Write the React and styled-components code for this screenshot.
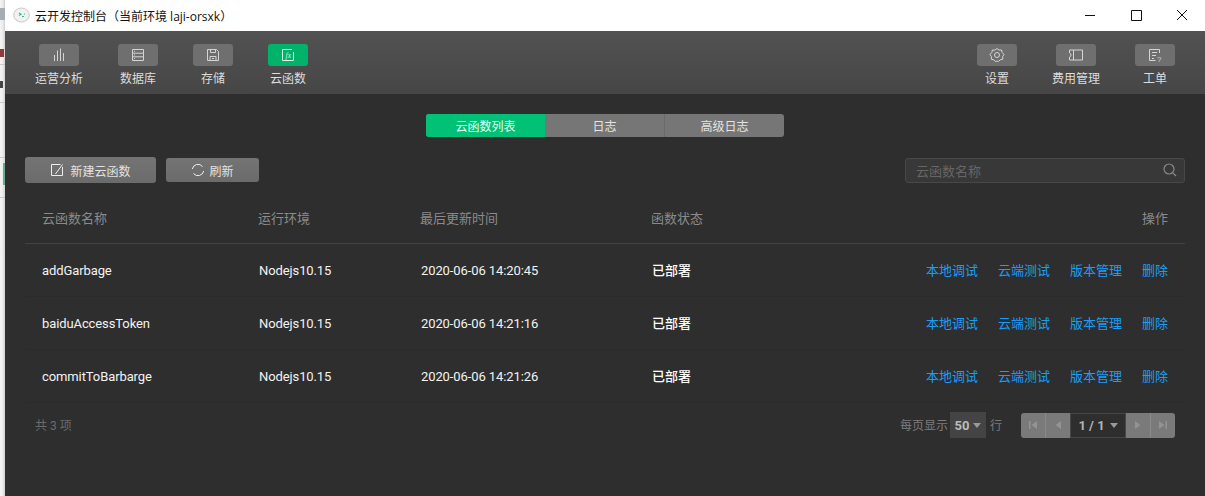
import React from 'react';
import styled, { createGlobalStyle } from 'styled-components';

const GlobalStyle = createGlobalStyle`
    html, body {
        margin: 0;
        padding: 0;
        background: #fff;
    }
    body {
        font-family: Roboto, "Noto Sans CJK SC", sans-serif;
        overflow: hidden;
    }
`;

const Page = styled.div`
    display: flex;
    width: 1205px;
    height: 496px;
    overflow: hidden;
`;

// sliver of the window behind
const BackStrip = styled.div`
    display: flex;
    flex-direction: column;
    width: 5px;
    background: linear-gradient(90deg, #f4f4f4 0, #ececec 55%, #cfcfcf 100%);
`;
const StripPart = styled.div`
    box-sizing: border-box;
    height: ${p => p.$h}px;
    width: ${p => p.$w || 5}px;
    margin-left: ${p => p.$left || 0}px;
    background: ${p => p.$bg || 'transparent'};
    border-bottom: ${p => (p.$line ? '1px solid #c9c9c9' : '0')};
`;

const Main = styled.div`
    flex: 1;
    display: flex;
    flex-direction: column;
    min-width: 0;
`;

const TitleBar = styled.div`
    display: flex;
    align-items: center;
    height: 31px;
    padding-left: 8px;
    background: #fff;
`;
const TitleText = styled.div`
    margin-left: 5px;
    font-family: "Open Sans", "Noto Sans CJK SC", sans-serif;
    font-size: 12px;
    color: #111;
    white-space: nowrap;
`;
const WinControls = styled.div`
    display: flex;
    margin: -1px 15px 0 auto;
    gap: 30px;
`;
const WinIcon = styled.svg`
    display: block;
    width: 16px;
    height: 16px;
    fill: none;
    stroke: #111;
    stroke-width: 1;
`;

const Header = styled.div`
    display: flex;
    justify-content: space-between;
    height: 63px;
    padding: 13px 30px 0;
    box-sizing: border-box;
    background: linear-gradient(180deg, #525252 0, #464646 100%);
`;
const NavGroup = styled.div`
    display: flex;
    gap: 35px;
`;
const NavItem = styled.div`
    display: flex;
    flex-direction: column;
    align-items: center;
    min-width: 40px;
`;
const NavButton = styled.div`
    display: flex;
    align-items: center;
    justify-content: center;
    width: 40px;
    height: 22px;
    border-radius: 3px;
    background: ${p => (p.$active ? '#00b26a' : '#6f6f6f')};
`;
const NavIcon = styled.svg`
    display: block;
    width: 16px;
    height: 16px;
    fill: none;
    stroke: ${p => (p.$active ? '#d8f5e8' : '#d4d4d4')};
    stroke-width: 1;
`;
const NavLabel = styled.div`
    margin-top: 5px;
    font-size: 12px;
    line-height: 16px;
    color: #dcdcdc;
    white-space: nowrap;
`;

const Content = styled.div`
    flex: 1;
    padding: 20px 20px 0;
    background: #2e2e2e;
`;

const Tabs = styled.div`
    display: flex;
    width: 358px;
    height: 23px;
    margin: 0 auto 20px;
    border-radius: 3px;
    overflow: hidden;
    background: #767676;
`;
const Tab = styled.div`
    flex: 1;
    display: flex;
    align-items: center;
    justify-content: center;
    font-size: 12px;
    color: ${p => (p.$active ? '#e6fff3' : '#e4e4e4')};
    background: ${p => (p.$active ? '#00c176' : 'transparent')};
    border-left: ${p => (p.$divider ? '1px solid #6a6a6a' : '0')};
`;

const Toolbar = styled.div`
    display: flex;
    align-items: center;
    height: 26px;
    margin-bottom: 10px;
`;
const ActionButton = styled.div`
    display: flex;
    align-items: center;
    justify-content: center;
    gap: ${p => p.$gap}px;
    width: ${p => p.$w}px;
    height: ${p => p.$h}px;
    margin-right: 10px;
    border-radius: 3px;
    font-size: 12px;
    color: #e2e2e2;
    background: linear-gradient(180deg, #747474 0, #6b6b6b 100%);
`;
const ButtonIcon = styled.svg`
    display: block;
    width: 14px;
    height: 14px;
    fill: none;
    stroke: #eee;
    stroke-width: 1;
`;
const Search = styled.div`
    display: flex;
    align-items: center;
    justify-content: space-between;
    width: 280px;
    height: 25px;
    margin-left: auto;
    padding: 0 7px 0 10px;
    box-sizing: border-box;
    border: 1px solid #484848;
    border-radius: 3px;
    background: #383838;
    font-size: 13px;
    color: #666;
`;
const SearchIcon = styled.svg`
    display: block;
    width: 14px;
    height: 14px;
    fill: none;
    stroke: #8a8a8a;
    stroke-width: 1.2;
`;

const HeadRow = styled.div`
    display: grid;
    grid-template-columns: 216px 162px 231px 1fr;
    align-items: center;
    height: 51px;
    padding-bottom: 2px;
    box-sizing: border-box;
    border-bottom: 1px solid #424242;
    font-size: 13px;
    color: #8a8a8a;
`;
const BodyRow = styled.div`
    display: grid;
    grid-template-columns: 217px 162px 231px 1fr;
    align-items: center;
    height: 53px;
    box-sizing: border-box;
    border-bottom: 1px solid #2b2b2b;
    font-size: 13px;
    color: #f2f2f2;
`;
const Cell = styled.div`
    padding: 0 17px;
    white-space: nowrap;
`;
const DataCell = styled(Cell)`
    letter-spacing: -0.1px;
`;
const SplitCell = styled.div`
    display: flex;
    justify-content: space-between;
    align-items: center;
`;
const StatusText = styled.span`
    padding-left: 17px;
    white-space: nowrap;
    font-weight: ${p => (p.$strong ? 500 : 400)};
    color: ${p => (p.$strong ? '#fff' : 'inherit')};
    margin-top: ${p => (p.$strong ? -2 : 0)}px;
`;
const Actions = styled.div`
    display: flex;
    justify-content: flex-end;
    gap: 20px;
    margin-top: -1px;
    padding: 0 17px;
`;
const ActionLink = styled.span`
    color: #1b9df5;
    white-space: nowrap;
`;

const Footer = styled.div`
    display: flex;
    align-items: center;
    height: 26px;
    margin-top: 9px;
    padding: 0 10px;
    font-size: 12px;
    color: #6b6b6b;
`;
const ItemCount = styled.span`
    margin-top: -2px;
`;
const PageSize = styled.div`
    display: flex;
    align-items: center;
    margin-left: auto;
    font-size: 12px;
    color: #7c7c7c;
`;
const PageSizeText = styled.span`
    margin-top: -1px;
`;
const SizeSelect = styled.div`
    display: flex;
    align-items: center;
    justify-content: center;
    gap: 4px;
    width: 36px;
    height: 26px;
    margin: 0 4px 0 2px;
    background: #444;
    font-weight: 700;
    font-size: 13px;
    color: #bbb;
`;
const Caret = styled.i`
    width: 0;
    height: 0;
    border-left: 4px solid transparent;
    border-right: 4px solid transparent;
    border-top: 5px solid #999;
`;
const Pager = styled.div`
    display: flex;
    height: 25px;
    margin-left: 19px;
    border-radius: 3px;
    overflow: hidden;
    background: #7a7a7a;
`;
const PagerButton = styled.div`
    display: flex;
    align-items: center;
    justify-content: center;
    width: 24px;
    border-left: ${p => (p.$divider ? '1px solid #8a8a8a' : '0')};
`;
const PagerIcon = styled.svg`
    display: block;
    width: 10px;
    height: 10px;
    fill: #939393;
`;
const PagerCurrent = styled.div`
    display: flex;
    align-items: center;
    justify-content: center;
    gap: 5px;
    width: 56px;
    box-sizing: border-box;
    border: 1px solid #474747;
    background: #2e2e2e;
    font-weight: 700;
    font-size: 13px;
    color: #b5b5b5;
`;

const navLeft = [
    { label: '运营分析', icon: <path d="M3.5 8v6M6.5 3.5V14M9.5 1.5V14M12.5 6v8" /> },
    { label: '数据库', icon: <path d="M2.5 2.5h11v11h-11zM2.5 6.2h11M2.5 9.8h11M4 4.3h1M4 8h1M4 11.6h1" /> },
    { label: '存储', icon: <path d="M2.5 2.5h9l2 2v9h-11zM5.5 2.5v3h5v-3M5 13.5v-4h6v4M7 11.5h2" /> },
    {
        label: '云函数',
        active: true,
        icon: (
            <>
                <path d="M12 2.5H2.5v11h11V5" />
                <text x="5.6" y="11" fontSize="7.5" fontStyle="italic" fontFamily="Liberation Serif, serif" fill="#d8f5e8" stroke="none">fx</text>
            </>
        ),
    },
];

const navRight = [
    {
        label: '设置',
        icon: (
            <>
                <path d="M8 1.5l2 1.6 2.6-.1.6 2.5 1.8 1.9-1.3 2.2.1 2.6-2.5.6L9.3 14.5 8 14l-1.6.5-1.6-1.7-2.5-.6.1-2.6L1 7.4l1.8-1.9.6-2.5 2.6.1z" />
                <circle cx="8" cy="8" r="2.5" />
            </>
        ),
    },
    { label: '费用管理', icon: <path d="M1.5 3h13v10h-13v-3a2 2 0 0 0 1.5-2 2 2 0 0 0-1.5-2zM5.5 3v10" /> },
    {
        label: '工单',
        icon: (
            <>
                <path d="M12.5 6V2.5h-10v11h6M5 5.5h5M5 8.5h4M5 11.5h2" />
                <text x="10" y="14.5" fontSize="8" fontFamily="Liberation Sans, sans-serif" fill="#d4d4d4" stroke="none">?</text>
            </>
        ),
    },
];

const rows = [
    { name: 'addGarbage', time: '2020-06-06 14:20:45' },
    { name: 'baiduAccessToken', time: '2020-06-06 14:21:16' },
    { name: 'commitToBarbarge', time: '2020-06-06 14:21:26' },
];

const NavEntry = ({ item }) => (
    <NavItem>
        <NavButton $active={item.active}>
            <NavIcon $active={item.active} viewBox="0 0 16 16">{item.icon}</NavIcon>
        </NavButton>
        <NavLabel>{item.label}</NavLabel>
    </NavItem>
);

export default function App() {
    return (
        <Page>
            <GlobalStyle />
            <BackStrip>
                <StripPart $h={8} />
                <StripPart $h={12} $bg="#a7adb5" />
                <StripPart $h={11} />
                <StripPart $h={18} />
                <StripPart $h={8} $w={4} $bg="#8f3a3a" />
                <StripPart $h={8} $line />
                <StripPart $h={16} />
                <StripPart $h={7} $w={3} $bg="#444" />
                <StripPart $h={15} $line />
                <StripPart $h={55} $line />
                <StripPart $h={5} />
                <StripPart $h={22} $w={2} $left={3} $bg="#6fa98c" />
                <StripPart $h={13} $line />
            </BackStrip>
            <Main>
                <TitleBar>
                    <svg width="17" height="17" viewBox="0 0 17 17">
                        <ellipse cx="8.5" cy="8" rx="7.8" ry="7" fill="#f1f1f1" stroke="#c9c9c9" />
                        <path d="M6 6l2 1.2-2 1.2M9 9.5h2M11 7h1" fill="none" stroke="#2fc27d" strokeWidth="1.2" />
                    </svg>
                    <TitleText>云开发控制台（当前环境 laji-orsxk）</TitleText>
                    <WinControls>
                        <WinIcon viewBox="0 0 16 16"><path d="M3 8.5h10" /></WinIcon>
                        <WinIcon viewBox="0 0 16 16"><path d="M3.5 3.5h10v10h-10z" /></WinIcon>
                        <WinIcon viewBox="0 0 16 16"><path d="M3 3l10 10M13 3L3 13" /></WinIcon>
                    </WinControls>
                </TitleBar>
                <Header>
                    <NavGroup>
                        {navLeft.map(item => <NavEntry key={item.label} item={item} />)}
                    </NavGroup>
                    <NavGroup>
                        {navRight.map(item => <NavEntry key={item.label} item={item} />)}
                    </NavGroup>
                </Header>
                <Content>
                    <Tabs>
                        <Tab $active>云函数列表</Tab>
                        <Tab>日志</Tab>
                        <Tab $divider>高级日志</Tab>
                    </Tabs>
                    <Toolbar>
                        <ActionButton $w={131} $h={26} $gap={6}>
                            <ButtonIcon viewBox="0 0 14 14">
                                <path d="M10.5 1.5h-9v11h11V4M12.5 1.5L5.5 11" />
                            </ButtonIcon>
                            新建云函数
                        </ActionButton>
                        <ActionButton $w={93} $h={24} $gap={4}>
                            <ButtonIcon viewBox="0 0 14 14">
                                <path d="M11.5 3.5A5.8 5.8 0 0 0 1.3 6M2.5 10.5a5.8 5.8 0 0 0 10.2-2.5" />
                            </ButtonIcon>
                            刷新
                        </ActionButton>
                        <Search>
                            云函数名称
                            <SearchIcon viewBox="0 0 14 14">
                                <circle cx="6" cy="6" r="5" />
                                <path d="M9.8 9.8L13 13" />
                            </SearchIcon>
                        </Search>
                    </Toolbar>
                    <HeadRow>
                        <Cell>云函数名称</Cell>
                        <Cell>运行环境</Cell>
                        <Cell>最后更新时间</Cell>
                        <SplitCell>
                            <StatusText>函数状态</StatusText>
                            <Cell>操作</Cell>
                        </SplitCell>
                    </HeadRow>
                    {rows.map(row => (
                        <BodyRow key={row.name}>
                            <DataCell>{row.name}</DataCell>
                            <DataCell>Nodejs10.15</DataCell>
                            <DataCell>{row.time}</DataCell>
                            <SplitCell>
                                <StatusText $strong>已部署</StatusText>
                                <Actions>
                                    <ActionLink>本地调试</ActionLink>
                                    <ActionLink>云端测试</ActionLink>
                                    <ActionLink>版本管理</ActionLink>
                                    <ActionLink>删除</ActionLink>
                                </Actions>
                            </SplitCell>
                        </BodyRow>
                    ))}
                    <Footer>
                        <ItemCount>共 3 项</ItemCount>
                        <PageSize>
                            <PageSizeText>每页显示</PageSizeText>
                            <SizeSelect>50<Caret /></SizeSelect>
                            <PageSizeText>行</PageSizeText>
                        </PageSize>
                        <Pager>
                            <PagerButton>
                                <PagerIcon viewBox="0 0 10 10"><path d="M1 1h1.5v8H1zM9 1v8L3.5 5z" /></PagerIcon>
                            </PagerButton>
                            <PagerButton $divider>
                                <PagerIcon viewBox="0 0 10 10"><path d="M8 1v8L2.5 5z" /></PagerIcon>
                            </PagerButton>
                            <PagerCurrent>1 / 1<Caret /></PagerCurrent>
                            <PagerButton>
                                <PagerIcon viewBox="0 0 10 10"><path d="M2 1v8L7.5 5z" /></PagerIcon>
                            </PagerButton>
                            <PagerButton $divider>
                                <PagerIcon viewBox="0 0 10 10"><path d="M1 1v8L6.5 5zM7.5 1H9v8H7.5z" /></PagerIcon>
                            </PagerButton>
                        </Pager>
                    </Footer>
                </Content>
            </Main>
        </Page>
    );
}
